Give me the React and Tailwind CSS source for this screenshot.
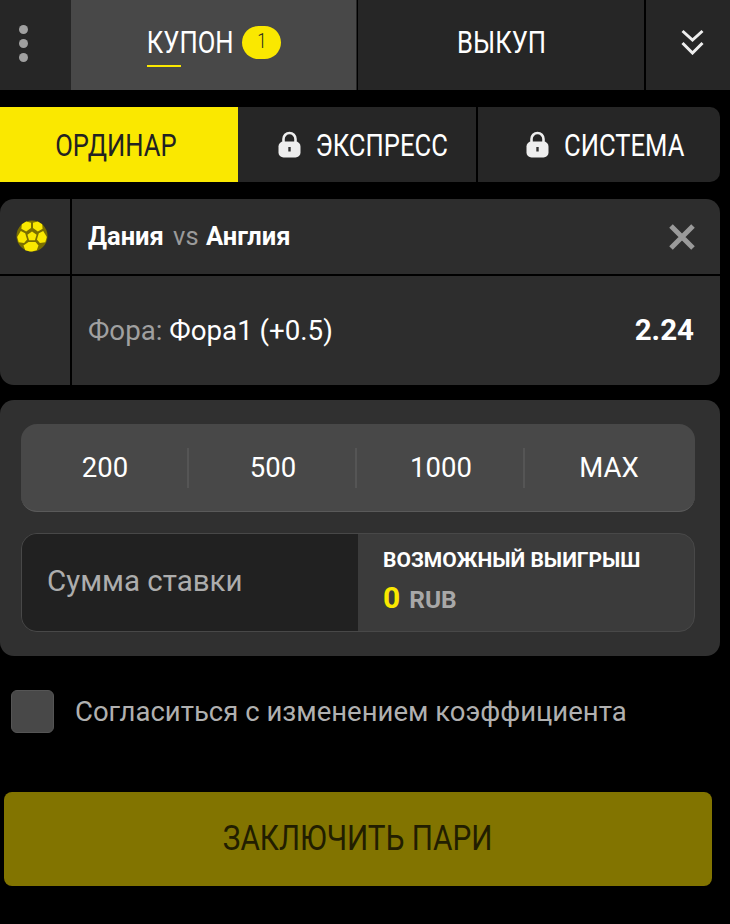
import React from "react";

const Lock = () => (
  <svg width="23" height="27" viewBox="0 0 23 27" className="shrink-0">
    <path d="M5.5 12V8a6 6 0 0 1 12 0v4" fill="none" stroke="#eeeeee" strokeWidth="2.6" />
    <rect x="0.5" y="10.5" width="22" height="16" rx="5" fill="#eeeeee" />
    <rect x="10.3" y="16" width="2.4" height="4.500" fill="#333333" />
  </svg>
);

const Ball = () => (
  <svg width="32" height="32" viewBox="0 0 32 32">
    <circle cx="16" cy="16" r="15.500" fill="#7a6f00" />
    <g fill="#fae800">
      <path d="M16 11.500l4.600 3.300-1.700 5.400h-5.800l-1.700-5.400z" />
      <path d="M10.200 1.500l4.800 1.200v5.300l-4.800 3.400-4.800-2.600 0.400-4.600z" />
      <path d="M21.800 1.500l-4.800 1.200v5.300l4.800 3.400 4.800-2.600-0.400-4.600z" />
      <path d="M4.800 11l4.400 2.300 1.900 6.100-3 3.600-5.400-0.800-1.500-5.200z" />
      <path d="M27.200 11l-4.400 2.300-1.900 6.100 3 3.600 5.400-0.800 1.500-5.200z" />
      <path d="M12.500 22h7l3 3.500-1.800 4.800-4.700 1.100h-2l-4.700-1.100-1.800-4.800z" />
    </g>
  </svg>
);

const Cond = ({ children, className = "" }) => (
  <span className={"inline-block origin-center scale-x-[0.8] whitespace-nowrap " + className}>{children}</span>
);

export default function App() {
  return (
    <div className="h-[924px] w-[730px] overflow-hidden bg-black font-['Roboto',sans-serif]">
      <div className="flex h-[90px] bg-[#262626] text-[32px] text-white">
        <div className="flex w-[70px] flex-col items-start justify-center gap-[5px] pb-[3px] pl-[19px]">
          <div className="h-[9px] w-[9px] rounded-full bg-[#a0a0a0]" />
          <div className="h-[9px] w-[9px] rounded-full bg-[#a0a0a0]" />
          <div className="h-[9px] w-[9px] rounded-full bg-[#a0a0a0]" />
        </div>
        <div className="ml-[1px] flex w-[285px] items-center justify-center bg-[#484848] pb-[6px] pl-[1px]">
          <div className="relative flex items-center">
            <Cond className="-mx-[11px]">КУПОН</Cond>
            <div className="absolute bottom-[-1px] left-[0px] h-[2px] w-[34px] bg-[#fae800]" />
            <div className="ml-[9px] flex h-[33px] w-[39px] items-center justify-center rounded-full bg-[#fae800] text-[21px] font-light text-[#222222]">
              <Cond>1</Cond>
            </div>
          </div>
        </div>
        <div className="ml-[1px] flex w-[288px] items-center justify-center border-l border-black pb-[6px]">
          <Cond>ВЫКУП</Cond>
        </div>
        <div className="-ml-[1px] flex flex-1 items-center justify-center border-l-2 border-black pb-[6px] pl-[8px]">
          <svg width="23" height="26" viewBox="0 0 23 26" fill="none" stroke="#eeeeee" strokeWidth="3">
            <path d="M1.500 2l10 9 10-9M1.500 14l10 10 10-10" />
          </svg>
        </div>
      </div>

      <div className="mt-[17px] flex h-[75px] w-[720px] overflow-hidden rounded-r-[10px] bg-[#262626] text-[32px] text-white">
        <div className="flex w-[238px] items-center justify-center bg-[#fae800] pr-[7px] text-[#222222]">
          <Cond>ОРДИНАР</Cond>
        </div>
        <div className="flex w-[238px] items-center justify-center gap-[11px] pl-[16px]">
          <Lock />
          <Cond className="-mx-[13px]">ЭКСПРЕСС</Cond>
        </div>
        <div className="flex flex-1 items-center justify-center gap-[12px] border-l-2 border-black pl-[16px]">
          <Lock />
          <Cond className="-mx-[12px]">СИСТЕМА</Cond>
        </div>
      </div>

      <div className="mt-[17px] w-[720px] overflow-hidden rounded-[14px] bg-[#2d2d2d]">
        <div className="flex h-[77px] border-b-2 border-black">
          <div className="flex w-[72px] items-center justify-center border-r-2 border-black pr-[6px] pb-[2px]">
            <Ball />
          </div>
          <div className="flex flex-1 items-center justify-between pl-[16px] pr-[25px]">
            <div className="text-[25.5px] text-white">
              <span className="font-bold">Дания</span>
              <span className="ml-[3px] mr-[1px] text-[#9a9a9a]"> vs </span>
              <span className="font-bold">Англия</span>
            </div>
            <svg width="26" height="26" viewBox="0 0 26 26" stroke="#9a9a9a" strokeWidth="5">
              <path d="M2 2l22 22M24 2L2 24" />
            </svg>
          </div>
        </div>
        <div className="flex h-[109px]">
          <div className="w-[72px] border-r-2 border-black" />
          <div className="flex flex-1 items-center justify-between pl-[16px] pr-[26px] text-[27.7px]">
            <div className="text-white">
              <span className="text-[#a0a0a0]">Фора: </span>Фора1 (+0.5)
            </div>
            <div className="text-[29.5px] font-bold text-white">2.24</div>
          </div>
        </div>
      </div>

      <div className="mt-[15px] h-[256px] w-[720px] rounded-[14px] bg-[#303030] pt-[24px] pl-[21px]">
        <div className="flex h-[88px] w-[674px] items-center rounded-[16px] border-b border-[#5a5a5a] bg-[#484848] text-[27.5px] text-white">
          <div className="flex h-[40px] w-[168px] items-center justify-center border-r-2 border-[#555555] pl-[2px]">200</div>
          <div className="flex h-[40px] w-[168px] items-center justify-center border-r-2 border-[#555555] pl-[2px]">500</div>
          <div className="flex h-[40px] w-[168px] items-center justify-center border-r-2 border-[#555555] pl-[2px]">1000</div>
          <div className="flex h-[40px] flex-1 items-center justify-center pr-[2px]">MAX</div>
        </div>
        <div className="mt-[21px] flex h-[99px] w-[674px] overflow-hidden rounded-[16px] border border-[#484848] bg-[#3b3b3b]">
          <div className="flex w-[336px] items-center bg-[#212121] pl-[25px] pb-[3px] text-[29.5px] text-[#adadad]">Сумма ставки</div>
          <div className="flex-1 pl-[25px] pt-[13px]">
            <div className="text-[21px] leading-[26px] font-bold text-white">ВОЗМОЖНЫЙ ВЫИГРЫШ</div>
            <div className="mt-[10px] flex items-baseline leading-[30px] font-bold">
              <span className="text-[30px] text-[#fae800]">0</span>
              <span className="ml-[9px] text-[24.5px] text-[#a8a8a8]">RUB</span>
            </div>
          </div>
        </div>
      </div>

      <div className="mt-[34px] ml-[11px] flex items-center">
        <div className="h-[43px] w-[43px] rounded-[6px] border border-[#555555] bg-[#484848]" />
        <div className="ml-[21px] text-[27.5px] text-[#b0b0b0]">Согласиться с изменением коэффициента</div>
      </div>

      <div className="mt-[59px] ml-[4px] flex h-[94px] w-[708px] items-center justify-center rounded-[8px] bg-[#827400] text-[35px] text-[#221e00]">
        <span className="inline-block scale-x-[0.85] whitespace-nowrap">ЗАКЛЮЧИТЬ ПАРИ</span>
      </div>
    </div>
  );
}
